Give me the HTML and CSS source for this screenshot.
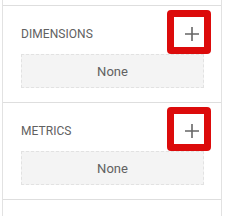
FILE: index.html
```html
<!DOCTYPE html>
<html>
<head>
<meta charset="utf-8">
<link rel="stylesheet" href="styles.css">
</head>
<body>
<div class="panel">
  <section class="section">
    <div class="header">
      <span class="title">DIMENSIONS</span>
      <span class="highlight">
        <button class="add" aria-label="Add dimension">
          <svg width="14" height="14" viewBox="0 0 14 14"><path d="M7 0V14M0 7H14" stroke="#666" stroke-width="1.6" fill="none"/></svg>
        </button>
      </span>
    </div>
    <div class="none">None</div>
  </section>
  <section class="section">
    <div class="header">
      <span class="title">METRICS</span>
      <span class="highlight">
        <button class="add" aria-label="Add metric">
          <svg width="14" height="14" viewBox="0 0 14 14"><path d="M7 0V14M0 7H14" stroke="#666" stroke-width="1.6" fill="none"/></svg>
        </button>
      </span>
    </div>
    <div class="none">None</div>
  </section>
  <div class="rest"></div>
</div>
</body>
</html>
```
FILE: styles.css
```css
html, body {
  margin: 0;
  padding: 0;
  background: #ffffff;
  font-family: Roboto, "Liberation Sans", Arial, sans-serif;
}
.panel {
  margin-left: 2px;
  width: 220px;
  height: 216px;
  padding-top: 5px;
  box-sizing: border-box;
  border-left: 1px solid #e2e2e2;
  border-right: 1px solid #e2e2e2;
}
.section {
  border-top: 1px solid #dedede;
  padding: 4px 10px 14px 18px;
}
.header {
  display: flex;
  align-items: center;
  justify-content: space-between;
  height: 44px;
  padding-right: 0;
}
.title {
  font-size: 12px;
  color: #616161;
  letter-spacing: 0.05px;
  padding-top: 3px;
}
.highlight {
  display: flex;
  width: 44px;
  height: 44px;
  box-sizing: border-box;
  border: 7px solid #dc0b0b;
  border-radius: 4px;
  background: #ffffff;
  margin-right: 0;
}
.add {
  flex: 1;
  border: 0;
  background: transparent;
  padding: 3px 0 0 5px;
  display: flex;
  align-items: center;
  justify-content: center;
  cursor: pointer;
}
.none {
  width: 183px;
  height: 34px;
  box-sizing: border-box;
  background: #f4f4f4;
  border: 1px dashed #e2e2e2;
  display: flex;
  align-items: center;
  justify-content: center;
  font-size: 13px;
  color: #616161;
}
.rest {
  border-top: 1px solid #dedede;
}
```
